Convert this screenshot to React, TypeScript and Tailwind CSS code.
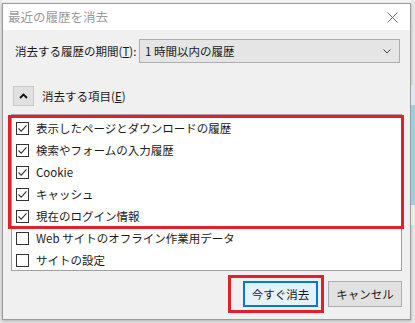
import React from "react";

const font = { fontFamily: '"Noto Sans CJK JP", "Noto Sans", sans-serif' };

type Item = { label: string; checked: boolean };

const items: Item[] = [
  { label: "表示したページとダウンロードの履歴", checked: true },
  { label: "検索やフォームの入力履歴", checked: true },
  { label: "Cookie", checked: true },
  { label: "キャッシュ", checked: true },
  { label: "現在のログイン情報", checked: true },
  { label: "Web サイトのオフライン作業用データ", checked: false },
  { label: "サイトの設定", checked: false },
];

function Checkbox({ checked }: { checked: boolean }) {
  return (
    <span className="flex h-[13px] w-[13px] shrink-0 items-center justify-center border border-[#333] bg-white">
      {checked && (
        <svg width="11" height="11" viewBox="0 0 11 11">
          <path d="M1.5 5.5 L4.2 8.2 L9.5 2.3" fill="none" stroke="#333" strokeWidth="1.1" />
        </svg>
      )}
    </span>
  );
}

export default function App() {
  return (
    <div className="relative h-[323px] w-[415px] overflow-hidden bg-[#e6e6e6] text-[11.5px] leading-[16px] text-[#1a1a1a]" style={font}>
      <div className="flex">
        <div className="w-[2px]" />
        <div className="flex flex-col">
          <div className="h-[3px] bg-[#f4f4f4]" />
          <div className="flex h-[317px] w-[409px] flex-col border border-[#9a9a9a] bg-[#f0f0f0] shadow-[0_1px_3px_rgba(0,0,0,0.25)]">
            {/* title bar */}
            <div className="flex h-[26px] shrink-0 items-center justify-between bg-white pl-[5px] pr-[12px]">
              <span className="text-[12.5px] text-[#9a9a9a]">最近の履歴を消去</span>
              <svg width="11" height="11" viewBox="0 0 11 11">
                <path d="M0.5 0.5 L10.5 10.5 M10.5 0.5 L0.5 10.5" stroke="#6a6a6a" strokeWidth="1" />
              </svg>
            </div>

            {/* period row */}
            <div className="mt-[9px] flex h-[24px] shrink-0 items-center pl-[12px]">
              <span className="w-[124px] whitespace-nowrap">
                消去する履歴の期間(<span className="underline">T</span>):
              </span>
              <div className="flex h-[24px] w-[261px] items-center justify-between border border-[#adadad] bg-[#e5e5e5] pl-[5px] pr-[8px]">
                <span className="whitespace-nowrap">1 時間以内の履歴</span>
                <svg width="8" height="5" viewBox="0 0 8 5">
                  <path d="M0.5 0.5 L4 4 L7.5 0.5" fill="none" stroke="#444" strokeWidth="1" />
                </svg>
              </div>
            </div>

            {/* section header */}
            <div className="mt-[23px] flex h-[20px] shrink-0 items-center pl-[10px]">
              <div className="flex h-[20px] w-[21px] items-center justify-center border border-[#c9c9c9] bg-[#e1e1e1]">
                <svg width="9" height="6" viewBox="0 0 9 6">
                  <path d="M1 5 L4.5 1.5 L8 5" fill="none" stroke="#111" strokeWidth="1.8" />
                </svg>
              </div>
              <span className="ml-[8px] whitespace-nowrap">
                消去する項目(<span className="underline">E</span>)
              </span>
            </div>

            {/* list box */}
            <div className="ml-[8px] mt-[8px] flex h-[157px] w-[391px] shrink-0 flex-col border border-[#a0a0a0] bg-white pt-[2px]">
              {items.map((it) => (
                <div key={it.label} className="flex h-[22px] shrink-0 items-center pl-[4px]">
                  <Checkbox checked={it.checked} />
                  <span className="ml-[7px] whitespace-nowrap">{it.label}</span>
                </div>
              ))}
            </div>

            {/* buttons */}
            <div className="mt-[10px] flex justify-end gap-[10px] pr-[8px]">
              <button className="flex h-[26px] w-[75px] items-center justify-center border-2 border-[#0078d7] bg-[#e5f1fb] whitespace-nowrap">
                今すぐ消去
              </button>
              <button className="flex h-[26px] w-[74px] items-center justify-center border border-[#adadad] bg-[#e1e1e1] whitespace-nowrap">
                キャンセル
              </button>
            </div>
          </div>
        </div>
        <div className="mt-[85px] flex flex-col">
          <div className="h-[20px] w-[4px] bg-[#dfe6f0]" />
          <div className="h-[100px] w-[4px] bg-[#9fd0d8]" />
          <div className="h-[20px] w-[4px] bg-[#eaeaea]" />
        </div>
      </div>

      {/* red annotation frames */}
      <div className="absolute left-[8px] top-[115px] h-[114px] w-[396px] border-[3px] border-[#e0202a]" />
      <div className="absolute left-[228px] top-[275px] h-[38px] w-[96px] border-[3px] border-[#e0202a]" />
    </div>
  );
}
